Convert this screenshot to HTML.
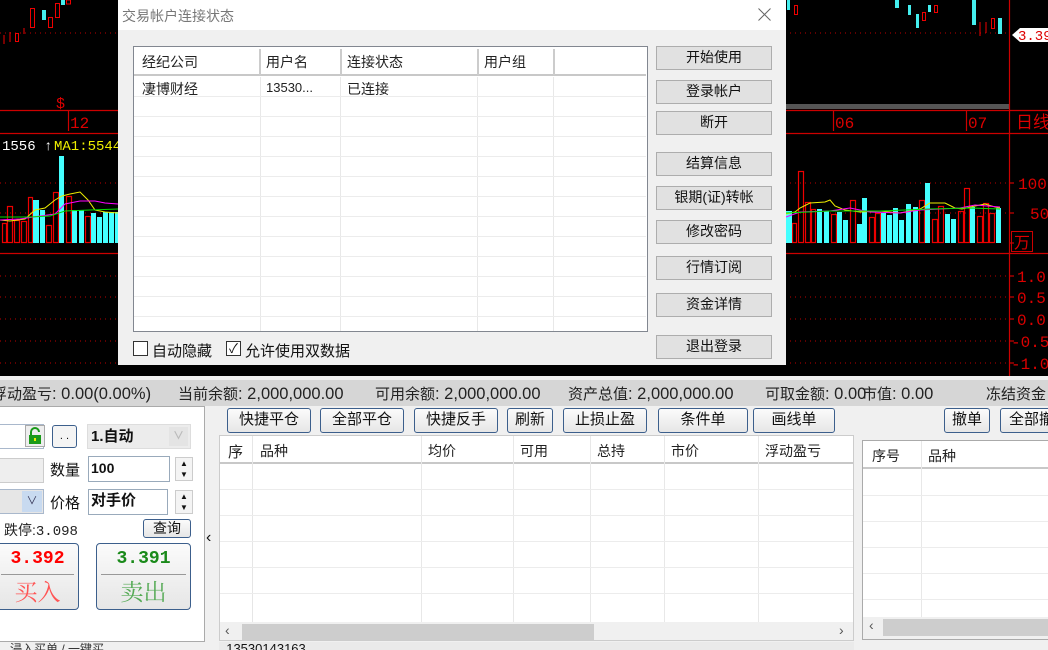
<!DOCTYPE html>
<html><head><meta charset="utf-8"><style>
*{margin:0;padding:0;box-sizing:border-box}
body{width:1048px;height:650px;overflow:hidden;background:#f0f0f0;position:relative;font-family:"Liberation Sans","Noto Sans CJK SC",sans-serif;color:#111}
.a{position:absolute}
.btn{position:absolute;background:#e1e1e1;border:1px solid #adadad;font-size:14px;text-align:center;line-height:21px;color:#111}
.tb{position:absolute;background:linear-gradient(#fbfbfb,#e6e6e6);border:1px solid #3c5f8c;border-radius:3px;font-size:15px;text-align:center;line-height:22px;color:#111}
.hd{position:absolute;font-size:14px;color:#222}
.vl{position:absolute;width:1px;background:#e8e8e8}
.hl{position:absolute;height:1px;background:#ececec}
.st{position:absolute;top:0;white-space:nowrap;font-size:16.5px}
.st b{font-weight:normal;font-size:15px}
</style></head><body>
<svg class="a" style="left:0;top:0" width="1048" height="376">
<rect width="1048" height="376" fill="#000"/>
<g stroke="#b00" stroke-dasharray="1,4" stroke-width="1">
<line x1="0" y1="33" x2="1009" y2="33"/><line x1="0" y1="183" x2="1009" y2="183"/><line x1="0" y1="213" x2="1009" y2="213"/>
<line x1="0" y1="276" x2="1009" y2="276"/><line x1="0" y1="297" x2="1009" y2="297"/><line x1="0" y1="319" x2="1009" y2="319"/><line x1="0" y1="341" x2="1009" y2="341"/><line x1="0" y1="363" x2="1009" y2="363"/>
</g>
<rect x="786" y="104" width="223" height="5" fill="#555"/>
<g stroke="#c00" stroke-width="1.2">
<line x1="0" y1="110.5" x2="1048" y2="110.5"/><line x1="0" y1="133.5" x2="1048" y2="133.5"/><line x1="0" y1="253.5" x2="1048" y2="253.5"/>
<line x1="1009.5" y1="0" x2="1009.5" y2="376"/>
<line x1="68.5" y1="110" x2="68.5" y2="131"/><line x1="833.5" y1="110" x2="833.5" y2="131"/><line x1="966.5" y1="110" x2="966.5" y2="131"/>
<line x1="1009" y1="183" x2="1014" y2="183"/><line x1="1009" y1="213" x2="1014" y2="213"/><line x1="1009" y1="243" x2="1014" y2="243"/>
<line x1="1009" y1="276" x2="1014" y2="276"/><line x1="1009" y1="297" x2="1014" y2="297"/><line x1="1009" y1="319" x2="1014" y2="319"/><line x1="1009" y1="341" x2="1014" y2="341"/><line x1="1009" y1="363" x2="1014" y2="363"/>
</g>
<g font-family="Liberation Mono,monospace" font-size="16" fill="#d00">
<text x="70" y="128">12</text><text x="835" y="128">06</text><text x="968" y="128">07</text>
<text x="1016" y="128" font-family="Noto Sans CJK SC" font-size="17">日线</text>
<text x="1018" y="189">100</text><text x="1030" y="219">50</text>
<text x="1017" y="282">1.0</text><text x="1017" y="303">0.5</text><text x="1017" y="325">0.0</text><text x="1011" y="347">-0.5</text><text x="1011" y="369">-1.0</text>
<text x="56" y="108" font-size="15">$</text>
</g>
<rect x="1011.5" y="231.5" width="21" height="20" fill="none" stroke="#c00"/>
<text x="1014" y="248" font-size="16" fill="#d00" font-family="Noto Sans CJK SC">万</text>
<path d="M1012 35 L1020 28 H1048 V42 H1020 Z" fill="#fff"/>
<text x="1018" y="40" font-family="Liberation Mono" font-size="14" fill="#d00">3.39</text>
<text x="2" y="150" font-family="Liberation Mono" font-size="14" fill="#fff">1556 ↑</text>
<text x="54" y="150" font-family="Liberation Mono" font-size="14" fill="#ee0">MA1:5544</text>
<g fill="none" stroke="#e00" stroke-width="1">
<rect x="15.5" y="33.5" width="3" height="8"/><rect x="30.5" y="8.5" width="4" height="19"/><rect x="48.5" y="17.5" width="4" height="10"/><rect x="55.5" y="3.5" width="4" height="14"/><rect x="66.5" y="0" width="4" height="4"/>
<line x1="4" y1="35" x2="4" y2="44"/><line x1="10" y1="32" x2="10" y2="42"/><line x1="24" y1="28" x2="24" y2="34"/>
<rect x="794.5" y="5.5" width="3" height="9"/><rect x="922.5" y="12.5" width="3" height="8"/><rect x="934.5" y="5.5" width="3" height="7"/>
<line x1="980" y1="22" x2="980" y2="36"/><line x1="986" y1="22" x2="986" y2="33"/><rect x="991.5" y="18.5" width="3" height="10"/>
</g>
<g fill="#4ee">
<rect x="42" y="10" width="4" height="10"/><rect x="61" y="0" width="4" height="5"/><rect x="787" y="0" width="3" height="10"/>
<rect x="895" y="0" width="4" height="8"/><rect x="908" y="5" width="3" height="10"/><rect x="916" y="14" width="3" height="14"/><rect x="928" y="5" width="3" height="7"/>
<rect x="972" y="0" width="4" height="25"/><rect x="998" y="18" width="4" height="16"/>
</g>
<g fill="none" stroke="#e00" stroke-width="1.2">
<rect x="2.5" y="223.5" width="4" height="19"/><rect x="7.5" y="206.5" width="5" height="36"/><rect x="14.5" y="220.5" width="5" height="22"/><rect x="21.5" y="221.5" width="5" height="21"/><rect x="28.5" y="197.5" width="4" height="45"/><rect x="46.5" y="225.5" width="5" height="17"/><rect x="53.5" y="192.5" width="5" height="50"/><rect x="66.5" y="196.5" width="5" height="46"/><rect x="85.5" y="216.5" width="5" height="26"/>
<rect x="792.5" y="223.5" width="4" height="19"/><rect x="798.5" y="171.5" width="5" height="71"/><rect x="805.5" y="202.5" width="5" height="40"/><rect x="811.5" y="209.5" width="4" height="33"/><rect x="831.5" y="214.5" width="5" height="28"/><rect x="850.5" y="200.5" width="5" height="42"/><rect x="869.5" y="217.5" width="5" height="25"/><rect x="875.5" y="213.5" width="5" height="29"/><rect x="919.5" y="200.5" width="5" height="42"/><rect x="932.5" y="219.5" width="5" height="23"/><rect x="938.5" y="206.5" width="5" height="36"/><rect x="958.5" y="211.5" width="5" height="31"/><rect x="964.5" y="188.5" width="5" height="54"/><rect x="977.5" y="216.5" width="5" height="26"/><rect x="983.5" y="203.5" width="5" height="39"/><rect x="989.5" y="213.5" width="5" height="29"/>
</g>
<g fill="#4ff">
<rect x="33" y="200" width="6" height="43"/><rect x="40" y="210" width="5" height="33"/><rect x="59" y="156" width="5" height="87"/><rect x="72" y="210" width="5" height="33"/><rect x="79" y="210" width="5" height="33"/><rect x="91" y="213" width="5" height="30"/><rect x="97" y="217" width="5" height="26"/><rect x="103" y="212" width="5" height="31"/><rect x="109" y="212" width="5" height="31"/><rect x="115" y="212" width="3" height="31"/>
<rect x="786" y="211" width="6" height="32"/><rect x="817" y="209" width="5" height="34"/><rect x="824" y="211" width="5" height="32"/><rect x="837" y="212" width="5" height="31"/><rect x="843" y="220" width="5" height="23"/><rect x="857" y="224" width="5" height="19"/><rect x="862" y="198" width="5" height="45"/><rect x="881" y="213" width="5" height="30"/><rect x="887" y="215" width="5" height="28"/><rect x="893" y="208" width="5" height="35"/><rect x="899" y="220" width="5" height="23"/><rect x="906" y="204" width="5" height="39"/><rect x="913" y="207" width="5" height="36"/><rect x="925" y="183" width="5" height="60"/><rect x="945" y="214" width="5" height="29"/><rect x="951" y="219" width="5" height="24"/><rect x="970" y="207" width="5" height="36"/><rect x="996" y="208" width="5" height="35"/>
</g>
<g fill="none" stroke-width="1">
<polyline stroke="#ee0" points="0,220 10,221 25,219 35,210 45,208 55,200 62,196 70,194 80,192 88,200 95,210 105,212 118,213"/>
<polyline stroke="#f0f" points="0,220 20,219 40,216 55,214 65,204 80,201 95,201 105,203 118,204"/>
<polyline stroke="#0d0" points="0,217 30,217 50,216 65,211 90,210 118,209"/>
<polyline stroke="#ee0" points="786,214 795,212 800,208 810,203 825,202 830,200 835,206 845,210 860,212 880,211 900,213 920,209 930,203 945,203 955,208 962,209 975,206 985,204 995,207 1000,208"/>
<polyline stroke="#f0f" points="786,217 800,212 830,211 850,208 870,212 900,213 920,210 960,208 975,205 1000,207"/>
<polyline stroke="#0d0" points="786,213 830,211 880,211 930,209 970,208 1000,209"/>
</g>
</svg>
<div class="a" style="left:118px;top:0;width:668px;height:365px;background:#f0f0f0">
<div class="a" style="left:0;top:0;width:668px;height:30px;background:#fff"></div>
<div class="a" style="left:4px;top:6px;font-size:14px;color:#777">交易帐户连接状态</div>
<svg class="a" style="left:640px;top:8px" width="13" height="13"><path d="M0.5 0.5 L12.5 12.5 M12.5 0.5 L0.5 12.5" stroke="#666" stroke-width="1"/></svg>
<div class="a" style="left:15px;top:46px;width:515px;height:286px;background:#fff;border:1px solid #828790"></div>
</div>
<div class="a" style="left:134px;top:47px;width:512px;height:284px;overflow:hidden">
<div class="a" style="left:0;top:0;width:512px;height:29px;background:#fff;border-bottom:2px solid #c8c8c8"></div>
<div class="vl" style="left:125px;top:2px;height:26px;background:#ccc;width:2px"></div>
<div class="vl" style="left:206px;top:2px;height:26px;background:#ccc;width:2px"></div>
<div class="vl" style="left:343px;top:2px;height:26px;background:#ccc;width:2px"></div>
<div class="vl" style="left:419px;top:2px;height:26px;background:#ccc;width:2px"></div>
<div class="hd" style="left:8px;top:5px">经纪公司</div><div class="hd" style="left:132px;top:5px">用户名</div><div class="hd" style="left:213px;top:5px">连接状态</div><div class="hd" style="left:350px;top:5px">用户组</div>
<div class="hd" style="left:8px;top:32px">凄博财经</div><div class="hd" style="left:132px;top:33px;font-size:13px">13530...</div><div class="hd" style="left:213px;top:32px">已连接</div>
<div class="vl" style="left:126px;top:30px;height:260px"></div><div class="vl" style="left:206px;top:30px;height:260px"></div><div class="vl" style="left:343px;top:30px;height:260px"></div><div class="vl" style="left:419px;top:30px;height:260px"></div>
<div class="hl" style="left:0;top:49px;width:512px"></div><div class="hl" style="left:0;top:69px;width:512px"></div><div class="hl" style="left:0;top:89px;width:512px"></div><div class="hl" style="left:0;top:109px;width:512px"></div><div class="hl" style="left:0;top:129px;width:512px"></div><div class="hl" style="left:0;top:149px;width:512px"></div><div class="hl" style="left:0;top:169px;width:512px"></div><div class="hl" style="left:0;top:189px;width:512px"></div><div class="hl" style="left:0;top:209px;width:512px"></div><div class="hl" style="left:0;top:229px;width:512px"></div><div class="hl" style="left:0;top:249px;width:512px"></div><div class="hl" style="left:0;top:269px;width:512px"></div>
</div>
<div class="btn" style="left:656px;top:46px;width:116px;height:24px">开始使用</div>
<div class="btn" style="left:656px;top:80px;width:116px;height:24px">登录帐户</div>
<div class="btn" style="left:656px;top:111px;width:116px;height:24px">断开</div>
<div class="btn" style="left:656px;top:152px;width:116px;height:24px">结算信息</div>
<div class="btn" style="left:656px;top:186px;width:116px;height:24px">银期(证)转帐</div>
<div class="btn" style="left:656px;top:220px;width:116px;height:24px">修改密码</div>
<div class="btn" style="left:656px;top:256px;width:116px;height:24px">行情订阅</div>
<div class="btn" style="left:656px;top:293px;width:116px;height:24px">资金详情</div>
<div class="btn" style="left:656px;top:335px;width:116px;height:24px">退出登录</div>
<div class="a" style="left:133px;top:341px;width:15px;height:15px;border:1px solid #333;background:#fff"></div>
<div class="a" style="left:152px;top:340px;font-size:15px">自动隐藏</div>
<div class="a" style="left:226px;top:341px;width:15px;height:15px;border:1px solid #333;background:#fff;font-size:13px;line-height:13px;text-align:center">✓</div>
<div class="a" style="left:245px;top:340px;font-size:15px">允许使用双数据</div>
<div class="a" style="left:0;top:376px;width:1048px;height:4px;background:#f0f0f0"></div>
<div class="a" style="left:0;top:380px;width:1048px;height:26px;background:#d6d6d6;line-height:29px;color:#222;overflow:hidden">
<span class="st" style="left:-8px"><b>浮动盈亏</b>: 0.00(0.00%)</span><span class="st" style="left:178px"><b>当前余额</b>: 2,000,000.00</span><span class="st" style="left:375px"><b>可用余额</b>: 2,000,000.00</span><span class="st" style="left:568px"><b>资产总值</b>: 2,000,000.00</span><span class="st" style="left:765px"><b>可取金额</b>: 0.00</span><span class="st" style="left:862px"><b>市值</b>: 0.00</span><span class="st" style="left:986px"><b>冻结资金</b></span></div>
<div class="a" style="left:-2px;top:406px;width:207px;height:236px;background:#fff;border:1px solid #aaa"></div>
<div class="a" style="left:-2px;top:424px;width:46px;height:25px;border:1px solid #a9b8cc;background:#fff"></div>
<div class="a" style="left:25px;top:425px;width:20px;height:22px;border:1px solid #aaa;background:#eee"></div>
<svg class="a" style="left:28px;top:427px" width="15" height="18"><path d="M3 8 V5 A4 4 0 0 1 11 5" fill="none" stroke="#1a9a1a" stroke-width="2"/><rect x="1" y="8" width="12" height="9" fill="#1a9a1a"/><rect x="6" y="11" width="2" height="3" fill="#ee0"/></svg>
<div class="a" style="left:52px;top:425px;width:25px;height:23px;border:1px solid #3c5f8c;border-radius:3px;background:#f4f4f4;font-size:11px;text-align:center;line-height:20px">. .</div>
<div class="a" style="left:87px;top:424px;width:104px;height:25px;border:1px solid #ddd;background:#ececec;font-size:15px;font-weight:bold;line-height:23px;padding-left:3px">1.自动<span style="position:absolute;right:2px;top:2px;width:19px;height:19px;background:#e4e4e4;color:#bbb;font-size:11px;text-align:center;line-height:19px">∨</span></div>
<div class="a" style="left:-2px;top:458px;width:46px;height:25px;border:1px solid #ccc;background:#eee"></div>
<div class="a" style="left:50px;top:459px;font-size:15px">数量</div>
<div class="a" style="left:88px;top:456px;width:82px;height:26px;border:1px solid #9ab;background:#fff;font-size:14px;font-weight:bold;line-height:22px;padding-left:2px">100</div>
<div class="a" style="left:175px;top:457px;width:18px;height:24px;border:1px solid #ccc;background:#f4f4f4;font-size:8px;text-align:center;line-height:11px">▲<br>▼</div>
<div class="a" style="left:-2px;top:489px;width:46px;height:25px;border:1px solid #a9b8cc;background:#e6e6e6"><span style="position:absolute;right:1px;top:1px;width:20px;height:21px;background:#c8daf0;color:#335;font-size:11px;text-align:center;line-height:21px">∨</span></div>
<div class="a" style="left:50px;top:492px;font-size:15px">价格</div>
<div class="a" style="left:88px;top:489px;width:80px;height:26px;border:1px solid #9ab;background:#fff;font-size:15px;font-weight:bold;line-height:22px;padding-left:2px">对手价</div>
<div class="a" style="left:175px;top:490px;width:18px;height:24px;border:1px solid #ccc;background:#f4f4f4;font-size:8px;text-align:center;line-height:11px">▲<br>▼</div>
<div class="a" style="left:4px;top:520px;font-size:14px;color:#222">跌停:<span style="font-family:'Liberation Mono'">3.098</span></div>
<div class="tb" style="left:143px;top:519px;width:48px;height:19px;line-height:16px;font-size:14px">查询</div>
<div class="tb" style="left:-4px;top:543px;width:83px;height:67px;border-radius:4px"><div style="color:#f00;font-family:'Liberation Mono';font-size:18px;font-weight:bold;line-height:30px">3.392</div><div style="margin:0 4px;border-top:1px solid #999"></div><div style="color:#f55;font-size:23px;line-height:32px;font-family:'Noto Serif CJK SC',serif">买入</div></div>
<div class="tb" style="left:96px;top:543px;width:95px;height:67px;border-radius:4px"><div style="color:#1a8a1a;font-family:'Liberation Mono';font-size:18px;font-weight:bold;line-height:30px">3.391</div><div style="margin:0 4px;border-top:1px solid #999"></div><div style="color:#5a5;font-size:23px;line-height:32px;font-family:'Noto Serif CJK SC',serif">卖出</div></div>
<div class="a" style="left:206px;top:529px;font-size:16px">‹</div>
<div class="a" style="left:0;top:642px;width:205px;height:8px;font-size:12px;color:#333;line-height:14px;overflow:hidden">&nbsp;&nbsp;&nbsp;浸入买单 / 一键买</div>
<div class="tb" style="left:227px;top:408px;width:84px;height:25px">快捷平仓</div>
<div class="tb" style="left:320px;top:408px;width:84px;height:25px">全部平仓</div>
<div class="tb" style="left:414px;top:408px;width:84px;height:25px">快捷反手</div>
<div class="tb" style="left:507px;top:408px;width:46px;height:25px">刷新</div>
<div class="tb" style="left:563px;top:408px;width:84px;height:25px">止损止盈</div>
<div class="tb" style="left:658px;top:408px;width:90px;height:25px">条件单</div>
<div class="tb" style="left:753px;top:408px;width:82px;height:25px">画线单</div>
<div class="tb" style="left:944px;top:408px;width:46px;height:25px">撤单</div>
<div class="tb" style="left:1000px;top:408px;width:60px;height:25px;text-align:left;padding-left:8px">全部撤</div>
<div class="a" style="left:219px;top:435px;width:635px;height:206px;background:#fff;border:1px solid #ccc;overflow:hidden">
<div class="a" style="left:0;top:0;width:635px;height:28px;border-bottom:2px solid #c8c8c8"></div>
<div class="hd" style="left:8px;top:5px;font-size:15px">序</div><div class="hd" style="left:40px;top:5px">品种</div><div class="hd" style="left:208px;top:5px">均价</div><div class="hd" style="left:300px;top:5px">可用</div><div class="hd" style="left:377px;top:5px">总持</div><div class="hd" style="left:451px;top:5px">市价</div><div class="hd" style="left:545px;top:5px">浮动盈亏</div>
<div class="vl" style="left:32px;top:0;height:186px;background:#e6e6e6"></div><div class="vl" style="left:201px;top:0;height:186px"></div><div class="vl" style="left:293px;top:0;height:186px"></div><div class="vl" style="left:370px;top:0;height:186px"></div><div class="vl" style="left:444px;top:0;height:186px"></div><div class="vl" style="left:538px;top:0;height:186px"></div>
<div class="hl" style="left:0;top:53px;width:635px"></div><div class="hl" style="left:0;top:79px;width:635px"></div><div class="hl" style="left:0;top:105px;width:635px"></div><div class="hl" style="left:0;top:131px;width:635px"></div><div class="hl" style="left:0;top:157px;width:635px"></div>
<div class="a" style="left:0;top:186px;width:635px;height:19px;background:#f0f0f0"></div>
<div class="a" style="left:22px;top:188px;width:352px;height:16px;background:#cdcdcd"></div>
<div class="a" style="left:5px;top:186px;font-size:14px;color:#555">‹</div><div class="a" style="left:619px;top:186px;font-size:14px;color:#555">›</div>
</div>
<div class="a" style="left:219px;top:642px;width:635px;height:8px;background:#eaeaea;font-size:13px;line-height:14px;overflow:hidden">&nbsp;&nbsp;13530143163</div>
<div class="a" style="left:862px;top:440px;width:190px;height:200px;background:#fff;border:1px solid #aaa;overflow:hidden">
<div class="a" style="left:0;top:0;width:190px;height:28px;border-bottom:2px solid #c8c8c8"></div>
<div class="hd" style="left:9px;top:5px">序号</div><div class="hd" style="left:65px;top:5px">品种</div>
<div class="vl" style="left:58px;top:0;height:180px"></div>
<div class="hl" style="left:0;top:54px;width:190px"></div><div class="hl" style="left:0;top:80px;width:190px"></div><div class="hl" style="left:0;top:106px;width:190px"></div><div class="hl" style="left:0;top:132px;width:190px"></div><div class="hl" style="left:0;top:158px;width:190px"></div>
<div class="a" style="left:0;top:176px;width:190px;height:22px;background:#f0f0f0"></div>
<div class="a" style="left:20px;top:178px;width:170px;height:17px;background:#cdcdcd"></div>
<div class="a" style="left:6px;top:176px;font-size:14px;color:#555">‹</div>
</div>
</body></html>
